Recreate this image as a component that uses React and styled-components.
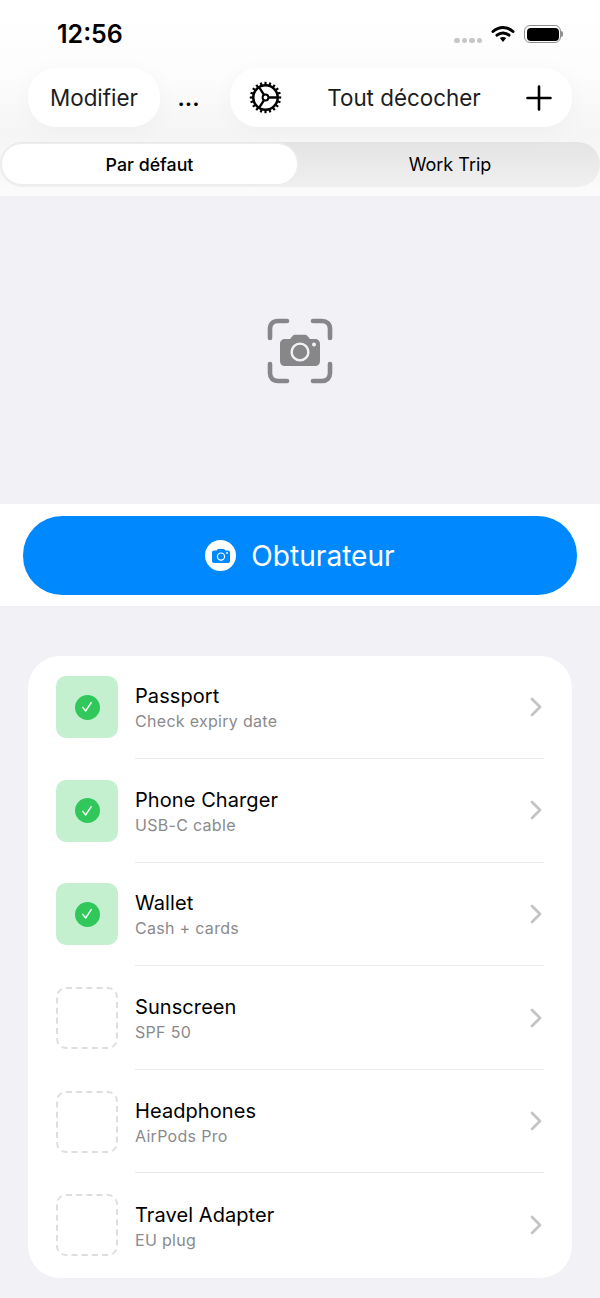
import React from 'react'
import styled, { createGlobalStyle } from 'styled-components'

const items = [
    { title: 'Passport', sub: 'Check expiry date', done: true },
    { title: 'Phone Charger', sub: 'USB-C cable', done: true },
    { title: 'Wallet', sub: 'Cash + cards', done: true },
    { title: 'Sunscreen', sub: 'SPF 50', done: false },
    { title: 'Headphones', sub: 'AirPods Pro', done: false },
    { title: 'Travel Adapter', sub: 'EU plug', done: false },
]

function Wifi() {
    return (
        <svg width="24" height="18" viewBox="0 0 24 18" fill="none">
            <path d="M2 6.5C8 1 16 1 22 6.5" stroke="#000" strokeWidth="3" strokeLinecap="round" />
            <path d="M6 10.2C9.5 7.2 14.5 7.2 18 10.2" stroke="#000" strokeWidth="3" strokeLinecap="round" />
            <path d="M8.8 13L12 17L15.2 13C13.3 11.6 10.7 11.6 8.8 13Z" fill="#000" />
        </svg>
    )
}

function Gear() {
    const teeth = []
    for (let i = 0; i < 20; i++) {
        teeth.push(<rect key={i} x="15.9" y="0.8" width="2.2" height="3.6" fill="#000" transform={`rotate(${i * 18} 17 17)`} />)
    }
    return (
        <svg width="33" height="33" viewBox="0 0 34 34" fill="none">
            {teeth}
            <circle cx="17" cy="17" r="12.6" stroke="#000" strokeWidth="2.6" />
            <circle cx="17" cy="17" r="3" stroke="#000" strokeWidth="2" />
            <path d="M20 17H29M15.5 14.4L10.5 6.5M15.5 19.6L10.5 27.5" stroke="#000" strokeWidth="2.4" />
        </svg>
    )
}

function Plus() {
    return (
        <svg width="26" height="26" viewBox="0 0 26 26" fill="none">
            <path d="M13 1.5V24.5M1.5 13H24.5" stroke="#000" strokeWidth="2.6" strokeLinecap="round" />
        </svg>
    )
}

function ScanCamera() {
    return (
        <svg width="66" height="66" viewBox="0 0 66 66" fill="none">
            <path d="M3 20V11C3 6 6 3 11 3H20M46 3H55C60 3 63 6 63 11V20M63 46V55C63 60 60 63 55 63H46M20 63H11C6 63 3 60 3 55V46" stroke="#87878a" strokeWidth="4.6" strokeLinecap="round" />
            <path d="M18 21H23L26 17.5C26.5 17 27 16.8 27.6 16.8H38.4C39 16.8 39.5 17 40 17.5L43 21H48C51 21 53 23 53 26V43C53 46 51 48 48 48H18C15 48 13 46 13 43V26C13 23 15 21 18 21Z" fill="#87878a" />
            <circle cx="33" cy="34" r="8.4" stroke="#f1f1f6" strokeWidth="2.4" />
            <circle cx="47" cy="26.5" r="2" fill="#f1f1f6" />
        </svg>
    )
}

function MiniCamera() {
    return (
        <svg width="20" height="16" viewBox="0 0 20 16" fill="none">
            <path d="M3 2.6H5.6L6.8 1H13.2L14.4 2.6H17C18.2 2.6 19 3.4 19 4.6V13C19 14.2 18.2 15 17 15H3C1.8 15 1 14.2 1 13V4.6C1 3.4 1.8 2.6 3 2.6Z" fill="#0088ff" />
            <circle cx="10" cy="8.6" r="3.6" stroke="#fff" strokeWidth="1.2" />
            <circle cx="16" cy="5" r="0.9" fill="#fff" />
        </svg>
    )
}

function Check() {
    return (
        <svg width="14" height="14" viewBox="0 0 14 14" fill="none">
            <path d="M2.8 7.4L5.6 11L11.2 2.6" stroke="#fff" strokeWidth="1.4" strokeLinecap="round" strokeLinejoin="round" />
        </svg>
    )
}

function Chevron() {
    return (
        <svg width="12" height="20" viewBox="0 0 12 20" fill="none">
            <path d="M2 2L10 10L2 18" stroke="#c4c4c6" strokeWidth="2.8" strokeLinecap="round" strokeLinejoin="round" />
        </svg>
    )
}

function App() {
    return (
        <Page>
            <GlobalStyle />
            <Header>
                <StatusBar>
                    <Clock>12:56</Clock>
                    <StatusIcons>
                        <Dots>
                            <i /><i /><i /><i />
                        </Dots>
                        <Wifi />
                        <Battery><span /></Battery>
                    </StatusIcons>
                </StatusBar>
                <Toolbar>
                    <EditPill>Modifier</EditPill>
                    <More>...</More>
                    <ActionPill>
                        <Gear />
                        <ActionLabel>Tout décocher</ActionLabel>
                        <Plus />
                    </ActionPill>
                </Toolbar>
                <Segments>
                    <Segment $active>Par défaut</Segment>
                    <Segment>Work Trip</Segment>
                </Segments>
            </Header>
            <Preview>
                <ScanCamera />
            </Preview>
            <ShutterBar>
                <ShutterButton>
                    <ShutterIcon><MiniCamera /></ShutterIcon>
                    Obturateur
                </ShutterButton>
            </ShutterBar>
            <List>
                <Card>
                    {items.map((item, i) => (
                        <Row key={item.title}>
                            <Thumb $done={item.done}>
                                {item.done && <CheckDot><Check /></CheckDot>}
                            </Thumb>
                            <RowBody $last={i === items.length - 1}>
                                <RowText>
                                    <Title>{item.title}</Title>
                                    <Sub>{item.sub}</Sub>
                                </RowText>
                                <Chevron />
                            </RowBody>
                        </Row>
                    ))}
                </Card>
            </List>
        </Page>
    )
}

const GlobalStyle = createGlobalStyle`
    html, body {
        margin: 0;
        padding: 0;
        background: #f1f1f6;
    }
    * {
        box-sizing: border-box;
    }
`

const Page = styled.div`
    width: 600px;
    height: 1298px;
    overflow: hidden;
    background: #f1f1f6;
    font-family: Inter, "Liberation Sans", sans-serif;
    color: #000;
`

const Header = styled.div`
    height: 196px;
    background: linear-gradient(#fff 0%, #fdfdfd 35%, #f5f5f5 68%, #f8f8f8 90%, #fcfcfc 100%);
`

const StatusBar = styled.div`
    height: 68px;
    display: flex;
    align-items: flex-start;
    justify-content: space-between;
    padding: 19px 39px 0 57px;
`

const Clock = styled.div`
    font-size: 25px;
    line-height: 30px;
    font-weight: 600;
`

const StatusIcons = styled.div`
    display: flex;
    align-items: center;
    gap: 9px;
    height: 30px;
`

const Dots = styled.div`
    display: flex;
    gap: 2px;
    margin-top: 13px;
    i {
        width: 5.5px;
        height: 5.5px;
        border-radius: 50%;
        background: #c6c6c8;
    }
`

const Battery = styled.div`
    position: relative;
    width: 37px;
    height: 18px;
    border: 1px solid #8f8f92;
    border-radius: 6px;
    padding: 1.5px;
    span {
        display: block;
        height: 100%;
        background: #000;
        border-radius: 4px;
    }
    &::after {
        content: "";
        position: absolute;
        right: -3px;
        top: 5px;
        width: 2px;
        height: 6px;
        border-radius: 0 2px 2px 0;
        background: #8f8f92;
    }
`

const Toolbar = styled.div`
    height: 59px;
    display: flex;
    align-items: center;
    padding: 0 28px;
`

const Pill = styled.div`
    height: 59px;
    border-radius: 28px;
    background: #fff;
    box-shadow: 0 4px 24px rgba(0, 0, 0, 0.03);
    display: flex;
    align-items: center;
`

const EditPill = styled(Pill)`
    width: 132px;
    justify-content: center;
    font-size: 22.4px;
    color: #1c1c1e;
`

const More = styled.div`
    width: 70px;
    padding-right: 13px;
    text-align: center;
    font-size: 23px;
    font-weight: 600;
    line-height: 24px;
`

const ActionPill = styled(Pill)`
    flex: 1;
    justify-content: space-between;
    padding: 0 20px 0 19px;
`

const ActionLabel = styled.div`
    font-size: 22.4px;
    color: #1c1c1e;
`

const Segments = styled.div`
    margin-top: 15px;
    height: 45px;
    border-radius: 23px;
    background: linear-gradient(#e4e4e4, #f0f0f0);
    display: flex;
    align-items: flex-start;
    padding-top: 2px;
`

const Segment = styled.div`
    width: ${p => (p.$active ? '295px' : '300px')};
    margin: ${p => (p.$active ? '0 3px 0 2px' : '0')};
    height: ${p => (p.$active ? '40px' : '41px')};
    border-radius: 20px;
    display: flex;
    align-items: center;
    justify-content: center;
    font-size: ${p => (p.$active ? '17.8px' : '18px')};
    font-weight: ${p => (p.$active ? 500 : 400)};
    background: ${p => (p.$active ? '#fff' : 'transparent')};
    box-shadow: ${p => (p.$active ? '0 0 0 1.5px #ededed' : 'none')};
`

const Preview = styled.div`
    height: 308px;
    padding-top: 2px;
    display: flex;
    align-items: center;
    justify-content: center;
`

const ShutterBar = styled.div`
    height: 102px;
    background: #fff;
    padding: 12px 23px 0;
`

const ShutterButton = styled.div`
    height: 79px;
    border-radius: 39px;
    background: #0088ff;
    color: #fff;
    display: flex;
    align-items: center;
    justify-content: center;
    gap: 15px;
    font-size: 28.1px;
`

const ShutterIcon = styled.div`
    width: 31px;
    height: 31px;
    border-radius: 50%;
    background: #fff;
    display: flex;
    align-items: center;
    justify-content: center;
`

const List = styled.div`
    padding: 50px 28px 0;
`

const Card = styled.div`
    background: #fff;
    border-radius: 32px;
    padding: 0 0 0.5px 28px;
`

const Row = styled.div`
    height: 103.6px;
    display: flex;
    align-items: center;
    gap: 17px;
    &:first-child {
        margin-top: -0.5px;
    }
`

const Thumb = styled.div`
    width: 62px;
    height: 62px;
    flex: none;
    border-radius: 10px;
    display: flex;
    align-items: center;
    justify-content: center;
    background: ${p => (p.$done ? '#c5f0d0' : 'transparent')};
    border: ${p => (p.$done ? 'none' : '2px dashed #dedee0')};
`

const CheckDot = styled.div`
    width: 25px;
    height: 25px;
    border-radius: 50%;
    background: #30c85a;
    display: flex;
    align-items: center;
    justify-content: center;
`

const RowBody = styled.div`
    flex: 1;
    align-self: stretch;
    display: flex;
    align-items: center;
    justify-content: space-between;
    margin-right: 28px;
    padding-right: 2px;
    border-bottom: ${p => (p.$last ? 'none' : '1.5px solid #e9e9ec')};
`

const RowText = styled.div`
    display: flex;
    flex-direction: column;
    gap: 1px;
    padding-top: 2px;
`

const Title = styled.div`
    font-size: 20px;
    line-height: 26px;
    letter-spacing: 0.08px;
`

const Sub = styled.div`
    font-size: 16px;
    line-height: 22px;
    letter-spacing: 0.3px;
    color: #8a8a8c;
`

export default App
